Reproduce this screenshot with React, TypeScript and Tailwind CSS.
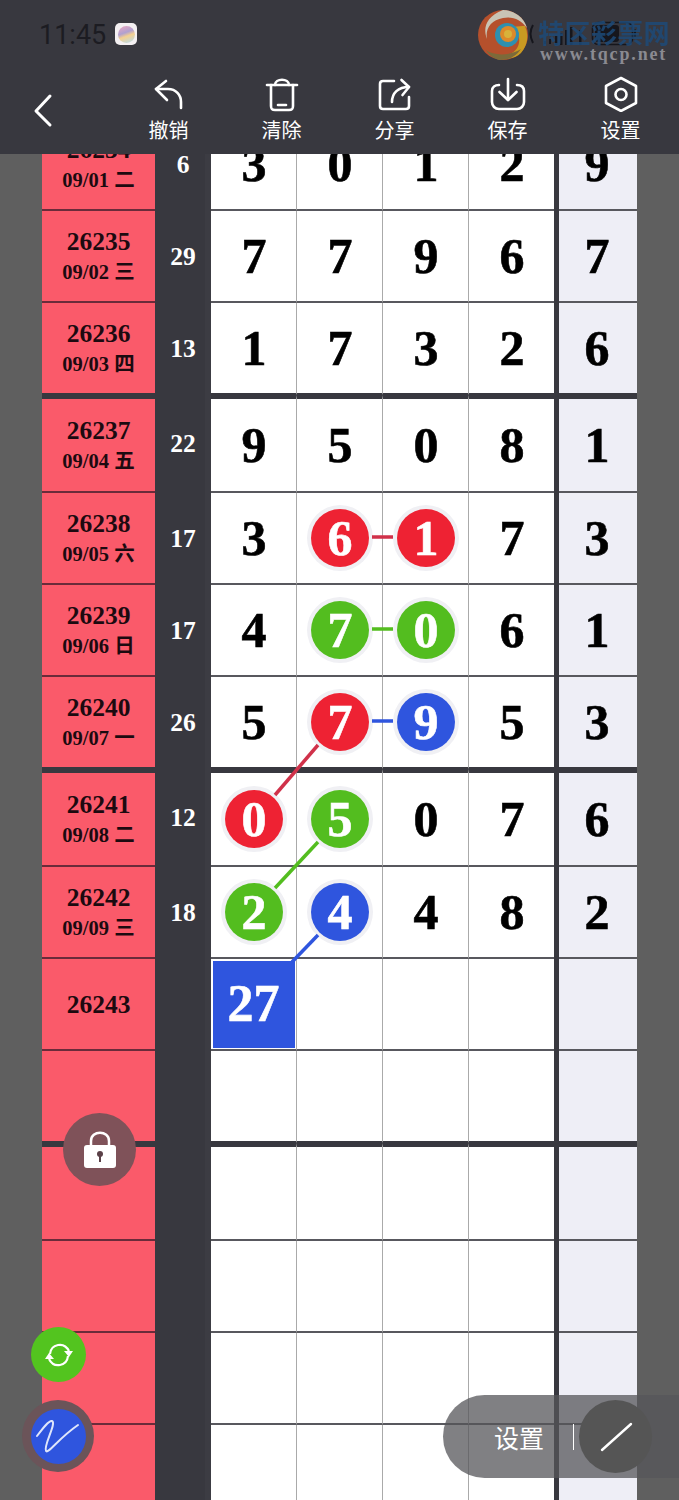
import React from "react";

type Ball = { v: string; c: "r" | "g" | "b" };
type Cell = string | Ball;
type Row = { id?: string; date?: string; sum?: string; cells?: Cell[]; last?: string; first?: boolean; pick?: string };

const r = (v: string): Ball => ({ v, c: "r" });
const g = (v: string): Ball => ({ v, c: "g" });
const b = (v: string): Ball => ({ v, c: "b" });

const rows: Row[] = [
  { id: "26234", date: "09/01 二", sum: "6", cells: ["3", "0", "1", "2"], last: "9" },
  { id: "26235", date: "09/02 三", sum: "29", cells: ["7", "7", "9", "6"], last: "7" },
  { id: "26236", date: "09/03 四", sum: "13", cells: ["1", "7", "3", "2"], last: "6" },
  { id: "26237", date: "09/04 五", sum: "22", cells: ["9", "5", "0", "8"], last: "1", first: true },
  { id: "26238", date: "09/05 六", sum: "17", cells: ["3", r("6"), r("1"), "7"], last: "3" },
  { id: "26239", date: "09/06 日", sum: "17", cells: ["4", g("7"), g("0"), "6"], last: "1" },
  { id: "26240", date: "09/07 一", sum: "26", cells: ["5", r("7"), b("9"), "5"], last: "3" },
  { id: "26241", date: "09/08 二", sum: "12", cells: [r("0"), g("5"), "0", "7"], last: "6", first: true },
  { id: "26242", date: "09/09 三", sum: "18", cells: [g("2"), b("4"), "4", "8"], last: "2" },
  { id: "26243", pick: "27" },
  {},
  { first: true },
  {},
  {},
  {},
];

const ballColor = { r: "bg-[#ee2233]", g: "bg-[#53bd1f]", b: "bg-[#2f55de]" };

function Digit({ cell }: { cell?: Cell }) {
  if (!cell) return null;
  if (typeof cell === "string") {
    return <span className="ml-px text-[50px] leading-none font-bold text-black [-webkit-text-stroke:0.6px]">{cell}</span>;
  }
  return (
    <span
      className={`ml-px flex h-[58px] w-[58px] items-center justify-center rounded-full text-[50px] leading-none font-bold text-white ring-4 ring-[#f0f0f4] [-webkit-text-stroke:0.6px] ${ballColor[cell.c]}`}
    >
      {cell.v}
    </span>
  );
}

function BoardRow({ row, beforeGroup }: { row: Row; beforeGroup: boolean }) {
  const height = row.first ? "h-[98px]" : "h-[92px]";
  const top = row.first ? "border-t-[4px] border-t-[#38383f]" : "";
  const redLine = beforeGroup ? "border-b-[#38383f]" : "border-b-[#6a2b3a]";
  const whiteLine = beforeGroup ? "border-b-[#38383f]" : "border-b-[#58585e]";
  return (
    <div className={`grid ${height} grid-cols-[113px_56px_85px_86px_86px_86px_5px_78px]`}>
      <div className={`flex flex-col items-center justify-center border-b-2 bg-[#fa5a6a] pt-[2px] text-[#1c0a10] ${redLine} ${top}`}>
        {row.id && <span className="text-[25.5px] leading-[30px] font-bold">{row.id}</span>}
        {row.date && <span className="text-[20.5px] leading-[30px] font-bold">{row.date}</span>}
      </div>
      <div className="flex items-center justify-center border-r-[6px] border-r-[#3c3c43] bg-[#38383f] pl-[6px] text-[25.5px] font-bold text-white">
        {row.sum}
      </div>
      {[0, 1, 2, 3].map((i) => (
        <div
          key={i}
          className={`flex items-center justify-center border-b-2 bg-white ${whiteLine} ${top} ${i > 0 ? "border-l border-l-[#aaaaaa]" : ""}`}
        >
          {i === 0 && row.pick ? (
            <span className="flex h-[87px] w-[82px] items-center justify-center bg-[#2f55de] text-[52px] leading-none font-bold text-white [-webkit-text-stroke:0.6px]">
              {row.pick}
            </span>
          ) : (
            <Digit cell={row.cells?.[i]} />
          )}
        </div>
      ))}
      <div className="bg-[#38383f]" />
      <div className={`flex items-center justify-center border-b-2 bg-[#eeeef6] pr-[3px] ${whiteLine} ${top}`}>
        <Digit cell={row.last} />
      </div>
    </div>
  );
}

function ToolButton({ label, children }: { label: string; children: React.ReactNode }) {
  return (
    <div className="flex flex-col items-center">
      <svg width="36" height="36" viewBox="0 0 36 36" fill="none" stroke="white" strokeWidth="2.6" strokeLinecap="round" strokeLinejoin="round">
        {children}
      </svg>
      <span className="mt-[5px] text-[20px] leading-[26px] text-white">{label}</span>
    </div>
  );
}

function Swirl() {
  return (
    <svg width="52" height="52" viewBox="0 0 52 52" className="absolute top-[9px] left-[477px]">
      <circle cx="26" cy="26" r="25" fill="#b5502c" />
      <path d="M26 1a25 25 0 0 1 24 18c-6-8-14-12-24-10C14 11 8 20 10 30 6 20 8 8 26 1Z" fill="#c9c4b4" />
      <path d="M48 17a25 25 0 0 1-4 27C38 50 26 52 20 46c10 2 20-2 22-12 1-7-2-12-6-16 5-1 9-1 12-1Z" fill="#c99a22" />
      <path d="M44 40a25 25 0 0 1-22 11c-6-2-10-5-13-10 8 6 24 6 35-1Z" fill="#7c6a3a" />
      <circle cx="30" cy="26" r="12" fill="#2f8fb0" />
      <circle cx="31" cy="25" r="8" fill="#dd8a2a" />
      <circle cx="31" cy="25" r="4" fill="#d8b23a" />
    </svg>
  );
}

export default function App() {
  return (
    <div className="relative h-[1500px] w-[679px] overflow-hidden bg-[#5f5f5f] font-['Liberation_Serif','Noto_Sans_CJK_SC',serif]">
      <header className="relative z-20 h-[154px] bg-[#38383f] font-['Noto_Sans_CJK_SC','Noto_Sans',sans-serif]">
        <div className="absolute top-[17px] left-[39px] font-['Roboto',sans-serif] text-[27px] leading-[36px] text-[#1c1c22]">11:45</div>
        <div className="absolute top-[23px] left-[115px] flex h-[22px] w-[22px] items-center justify-center rounded-[5px] bg-[#f4f0f2]">
          <div className="h-[17px] w-[17px] rounded-full bg-[linear-gradient(160deg,#f0a8c0_0%,#b0a0d0_40%,#f4d090_58%,#b0dcf4_100%)]" />
        </div>

        {/* signal and battery */}
        <svg width="120" height="34" viewBox="0 0 120 34" className="absolute top-[16px] left-[525px]" fill="#16161c">
          <path d="M8 9c-3 5-3 12 0 18" fill="none" stroke="#16161c" strokeWidth="2" />
          <rect x="19" y="25" width="2" height="3" />
          <rect x="24" y="23" width="2" height="5" />
          <rect x="30" y="20" width="2.5" height="9" />
          <rect x="35" y="17" width="2.5" height="12" />
          <rect x="40" y="14" width="2.5" height="15" />
          <rect x="45" y="11" width="2.5" height="18" />
          <rect x="54" y="14" width="2.5" height="15" />
          <rect x="67.5" y="6.5" width="40" height="22" rx="6" fill="none" stroke="#16161c" strokeWidth="1.6" />
          <rect x="70" y="9" width="24" height="17" rx="3" />
          <rect x="109" y="13" width="2" height="8" rx="1" />
        </svg>

        {/* site stamp in the top corner */}
        <Swirl />
        <div className="absolute top-[14px] left-[538px] text-[26px] leading-[36px] font-bold tracking-[0.4px] whitespace-nowrap text-[#1d4a78] opacity-85 blur-[0.6px]">特区彩票网</div>
        <div className="absolute top-[44px] left-[540px] font-['Liberation_Serif',serif] text-[18px] leading-[20px] font-bold tracking-[1.85px] text-[#8a8a91]">www.tqcp.net</div>

        <svg width="24" height="36" viewBox="0 0 24 36" fill="none" stroke="white" strokeWidth="3" strokeLinecap="round" strokeLinejoin="round" className="absolute top-[93px] left-[32px]">
          <path d="M18 3 4 18l14 14" />
        </svg>

        <div className="absolute top-[76px] left-[112px] grid w-[565px] grid-cols-5">
          <ToolButton label="撤销">
            <path d="M15 5 5 13l11 11" />
            <path d="M5 13h12c8 0 13 6 13 13v6" />
          </ToolButton>
          <ToolButton label="清除">
            <path d="M3 9h30" />
            <path d="M11 9c0-7 14-7 14 0" />
            <path d="M7 9v21c0 3 1 4 4 4h14c3 0 4-1 4-4V9" />
            <path d="M14 29h8" />
          </ToolButton>
          <ToolButton label="分享">
            <path d="M17 5H6C4 5 3 6 3 8v22c0 2 1 3 3 3h23c2 0 3-1 3-3V21" />
            <path d="M15 26c0-9 6-15 17-15" />
            <path d="M24.5 4l7.5 7-6.5 8" />
          </ToolButton>
          <ToolButton label="保存">
            <path d="M9 9c-4 0-7 2-7 6v11c0 4 3 7 7 7h18c4 0 7-3 7-7V15c0-4-3-6-7-6" />
            <path d="M18 3v21" />
            <path d="M9.5 16l8.5 8 8.5-8" />
          </ToolButton>
          <ToolButton label="设置">
            <path d="M18 2 33 10v17l-15 8-15-8V10Z" />
            <circle cx="18" cy="18.5" r="5.5" />
          </ToolButton>
        </div>
      </header>

      {/* board, scrolled so the first row sits under the toolbar */}
      <main className="-mt-[35px] pl-[42px]">
        {rows.map((row, i) => (
          <BoardRow key={i} row={row} beforeGroup={!!rows[i + 1]?.first} />
        ))}
      </main>

      {/* connectors between the marked numbers */}
      <svg width="679" height="1500" viewBox="0 0 679 1500" className="pointer-events-none absolute top-0 left-0 z-10" fill="none" strokeWidth="3.5">
        <path d="M372 537h21" stroke="#d0314a" />
        <path d="M372 629h21" stroke="#53bd1f" />
        <path d="M372 721h21" stroke="#2f55de" />
        <path d="M318 745 275 795" stroke="#d0314a" />
        <path d="M318 842 275 888" stroke="#53bd1f" />
        <path d="M318 935 292 962" stroke="#2f55de" />
      </svg>

      {/* lock */}
      <div className="absolute top-[1113px] left-[63px] z-10 flex h-[73px] w-[73px] items-center justify-center rounded-full bg-[#7f5259]">
        <svg width="34" height="40" viewBox="0 0 34 40" fill="none">
          <path d="M8 18V11c0-11 18-11 18 0v7" stroke="white" strokeWidth="2.5" />
          <rect x="1" y="15" width="32" height="23" rx="3" fill="white" />
          <circle cx="17" cy="24" r="3" fill="#5a4048" />
          <rect x="16" y="25" width="2" height="7" fill="#5a4048" />
        </svg>
      </div>

      {/* refresh */}
      <div className="absolute top-[1327px] left-[31px] z-10 flex h-[55px] w-[55px] items-center justify-center rounded-full bg-[#53c41f]">
        <svg width="30" height="26" viewBox="0 0 30 26" fill="none" stroke="white" strokeWidth="2.2">
          <path d="M6 12C7 2 20-1 25 9" />
          <path d="M24 14C23 24 10 27 5 17" />
          <path d="M20 9h9l-4 6Z" fill="white" strokeWidth="0" />
          <path d="M1 17h9L5 11Z" fill="white" strokeWidth="0" />
        </svg>
      </div>

      {/* pen */}
      <div className="absolute top-[1400px] left-[22px] z-10 flex h-[72px] w-[72px] items-center justify-center rounded-full bg-[#6b5459]">
        <div className="flex h-[55px] w-[55px] items-center justify-center rounded-full bg-[#2f55de]">
          <svg width="46" height="40" viewBox="0 0 46 40" fill="none" stroke="#dfe6fb" strokeWidth="2" strokeLinecap="round">
            <path d="M2 20C8 12 14 4 17 5c5 2-9 25-6 30 2 3 13-13 32-26" />
          </svg>
        </div>
      </div>

      {/* draw-mode pill */}
      <div className="absolute top-[1395px] left-[443px] z-10 flex h-[83px] w-[236px] items-center rounded-l-[42px] bg-[#55555a]/75 font-['Noto_Sans_CJK_SC',sans-serif]">
        <span className="ml-[51px] text-[25px] leading-[30px] text-white">设置</span>
        <span className="ml-[29px] h-[26px] w-px bg-white" />
        <div className="ml-[5px] flex h-[73px] w-[73px] items-center justify-center rounded-full bg-[#555555]">
          <svg width="36" height="32" viewBox="0 0 36 32" stroke="white" strokeWidth="2.4" strokeLinecap="round">
            <path d="M4 29 33 3" />
          </svg>
        </div>
      </div>
    </div>
  );
}
